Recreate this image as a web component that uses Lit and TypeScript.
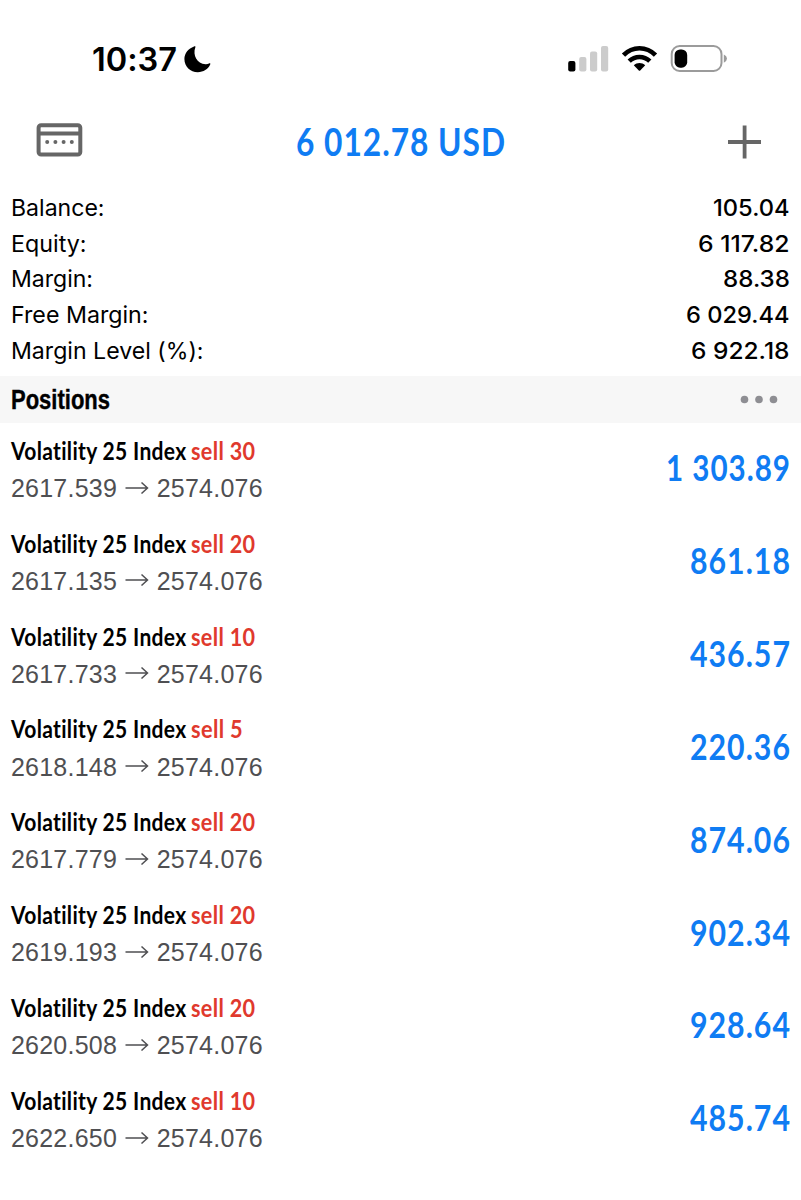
import { LitElement, html, css } from "lit";
import { customElement, property, query } from "lit/decorators.js";

/* One line of text condensed horizontally to an exact width. */
@customElement("fit-text")
class FitText extends LitElement {
  @property() text = "";
  @property({ type: Number }) width = 100;
  @query("span") label!: HTMLSpanElement;
  static styles = css`
    :host { display: block; flex: none; box-sizing: border-box; white-space: nowrap; font-variant-ligatures: none; }
    span { display: inline-block; transform-origin: 0 50%; vertical-align: top; }
  `;
  render() {
    return html`<span>${this.text}</span>`;
  }
  updated() {
    this.style.width = `${this.width}px`;
    this.label.style.transform = "none";
    const natural = this.label.getBoundingClientRect().width;
    if (natural > 0) this.label.style.transform = `scaleX(${this.width / natural})`;
  }
}

interface Position { side: string; sideWidth: number; open: string; profit: string; profitWidth: number; }

const NAME = "Volatility 25 Index";
const CURRENT = "2574.076";
const STATS: [string, number, string, number][] = [
  ["Balance:", 93.5, "105.04", 76.5],
  ["Equity:", 75.5, "6 117.82", 91.5],
  ["Margin:", 82, "88.38", 67],
  ["Free Margin:", 137.5, "6 029.44", 103.5],
  ["Margin Level (%):", 192.5, "6 922.18", 98.5],
];
const POSITIONS: Position[] = [
  { side: "sell 30", sideWidth: 64.5, open: "2617.539", profit: "1 303.89", profitWidth: 125 },
  { side: "sell 20", sideWidth: 64.5, open: "2617.135", profit: "861.18", profitWidth: 101 },
  { side: "sell 10", sideWidth: 64.5, open: "2617.733", profit: "436.57", profitWidth: 101 },
  { side: "sell 5", sideWidth: 52, open: "2618.148", profit: "220.36", profitWidth: 101 },
  { side: "sell 20", sideWidth: 64.5, open: "2617.779", profit: "874.06", profitWidth: 101 },
  { side: "sell 20", sideWidth: 64.5, open: "2619.193", profit: "902.34", profitWidth: 101 },
  { side: "sell 20", sideWidth: 64.5, open: "2620.508", profit: "928.64", profitWidth: 101 },
  { side: "sell 10", sideWidth: 64.5, open: "2622.650", profit: "485.74", profitWidth: 101 },
];

@customElement("app-root")
class AppRoot extends LitElement {
  static styles = css`
    :host {
      display: block;
      width: 801px;
      height: 1200px;
      overflow: hidden;
      background: #fff;
      color: #000;
      font-family: Inter, "Liberation Sans", sans-serif;
    }
    svg { display: block; flex: none; }
    .status {
      box-sizing: border-box;
      height: 108px;
      padding: 40px 73px 0 92px;
      display: flex;
      justify-content: space-between;
      align-items: flex-start;
    }
    .clock { display: flex; gap: 7px; }
    .time { font-size: 32px; line-height: 40px; font-weight: 600; }
    .toolbar {
      box-sizing: border-box;
      height: 82px;
      padding: 0 39px 0 36px;
      display: grid;
      grid-template-columns: 47px 1fr 34px;
    }
    .total {
      justify-self: center;
      margin-right: 10px;
      padding-top: 10px;
      color: #0f7cf3;
      font-family: Lato, sans-serif;
      font-size: 38.5px;
      line-height: 46px;
      font-weight: 700;
      letter-spacing: 1.2px;
    }
    .stats { height: 185.5px; }
    .stat {
      height: 35.75px;
      padding: 0 11.5px 0 11px;
      display: flex;
      justify-content: space-between;
      align-items: center;
      font-size: 23px;
    }
    .amount { font-weight: 500; }
    .section {
      box-sizing: border-box;
      height: 47px;
      padding: 0 23px 0 11px;
      display: flex;
      justify-content: space-between;
      background: #f7f7f7;
    }
    .heading {
      padding-top: 9px;
      font-family: "Liberation Sans", sans-serif;
      font-size: 27px;
      line-height: 30px;
      font-weight: 700;
      -webkit-text-stroke: 0.4px currentColor;
    }
    .row {
      box-sizing: border-box;
      height: 92.86px;
      padding: 0 10.5px 0 11px;
      display: flex;
      justify-content: space-between;
    }
    .line {
      box-sizing: border-box;
      display: flex;
      gap: 4.5px;
      height: 50px;
      padding-top: 12.4px;
      font-family: Lato, sans-serif;
      font-size: 25.5px;
      line-height: 30px;
      font-weight: 700;
      letter-spacing: 0.4px;
    }
    .side { color: #e0392d; }
    .prices {
      display: flex;
      align-items: center;
      height: 32px;
      font-family: "Liberation Sans", sans-serif;
      font-size: 25px;
      letter-spacing: 0.22px;
      color: #4f4f52;
    }
    .arrow { margin: 0 8px 0 7.7px; }
    .profit {
      padding-top: 24.8px;
      color: #0f7cf3;
      font-family: Lato, sans-serif;
      font-size: 36px;
      line-height: 40px;
      font-weight: 700;
      letter-spacing: 1.2px;
    }
  `;

  renderStatus() {
    return html`<div class="status">
      <div class="clock">
        <fit-text class="time" text="10:37" .width=${85}></fit-text>
        <svg width="28" height="40" viewBox="184 40 28 40">
          <path d="M194 46.5C195 46 195.8 46.5 195.3 47.6C192.5 55 197 64.5 206 64.2C207.2 64.2 208 63.8 209 63.4C210 63 210.7 63.6 210.2 64.6C208 69.3 203.5 72.2 197.8 72.2C190.3 72.2 184.4 66.6 184.4 59C184.4 53.3 188.5 48.5 194 46.5Z"/>
        </svg>
      </div>
      <svg width="160" height="40" viewBox="568 40 160 40">
        <rect x="568.2" y="61" width="7.2" height="10.5" rx="2"/>
        <g fill="#ccc">
          <rect x="579.2" y="57" width="7.2" height="14.5" rx="2"/>
          <rect x="590" y="51.5" width="7.2" height="20" rx="2"/>
          <rect x="601" y="46" width="7.2" height="25.5" rx="2"/>
        </g>
        <g fill="none" stroke="#000" stroke-width="4.6">
          <path d="M623.5 55.2C632.5 46 646.5 46 655.5 55.2"/>
          <path d="M629.2 61.2C635 55.5 644 55.5 649.8 61.2"/>
        </g>
        <path d="M633.8 65.3C637 62.3 642 62.3 645.2 65.3L640.2 70.4Q639.5 71 638.8 70.4Z"/>
        <rect x="671.7" y="46" width="49.8" height="25" rx="8" fill="none" stroke="#9b9b9b" stroke-width="2"/>
        <rect x="674.6" y="49.5" width="12.6" height="18.2" rx="5.5"/>
        <path d="M723.8 54.5Q727 56 727 58.5Q727 61 723.8 62.7Z" fill="#9b9b9b"/>
      </svg>
    </div>`;
  }

  renderToolbar() {
    return html`<div class="toolbar">
      <svg width="47" height="60" viewBox="36 108 47 60">
        <rect x="38.6" y="125.3" width="41.7" height="29.3" rx="2.5" fill="none" stroke="#666" stroke-width="4"/>
        <path d="M39 133.6H80" stroke="#666" stroke-width="4"/>
        <g fill="#666"><circle cx="47.2" cy="142" r="2"/><circle cx="55.4" cy="142" r="2"/><circle cx="63.6" cy="142" r="2"/><circle cx="71.8" cy="142" r="2"/></g>
      </svg>
      <fit-text class="total" text="6 012.78 USD" .width=${210}></fit-text>
      <svg width="34" height="60" viewBox="728 108 34 60">
        <path d="M728 142H761M744.6 125.5V158.5" stroke="#666" stroke-width="3.8" fill="none"/>
      </svg>
    </div>`;
  }

  render() {
    return html`
      ${this.renderStatus()} ${this.renderToolbar()}
      <div class="stats">
        ${STATS.map(([k, kw, v, vw]) => html`<div class="stat">
          <fit-text text=${k} .width=${kw}></fit-text>
          <fit-text class="amount" text=${v} .width=${vw}></fit-text>
        </div>`)}
      </div>
      <div class="section">
        <fit-text class="heading" text="Positions" .width=${99}></fit-text>
        <svg width="38" height="47" viewBox="740 375.5 38 47" fill="#8e8e93">
          <circle cx="744.5" cy="399" r="3.8"/><circle cx="759" cy="399" r="3.8"/><circle cx="773.5" cy="399" r="3.8"/>
        </svg>
      </div>
      ${POSITIONS.map((p) => html`<div class="row">
        <div>
          <div class="line">
            <fit-text text=${NAME} .width=${175.5}></fit-text>
            <fit-text class="side" text=${p.side} .width=${p.sideWidth}></fit-text>
          </div>
          <div class="prices">
            <span>${p.open}</span>
            <svg class="arrow" width="24" height="16" viewBox="0 0 24 16" fill="none" stroke="#4f4f52" stroke-width="1.5">
              <path d="M0.5 7H22M16.5 1.5L22.5 7L16.5 12.5"/>
            </svg>
            <span>${CURRENT}</span>
          </div>
        </div>
        <fit-text class="profit" text=${p.profit} .width=${p.profitWidth}></fit-text>
      </div>`)}
    `;
  }
}
